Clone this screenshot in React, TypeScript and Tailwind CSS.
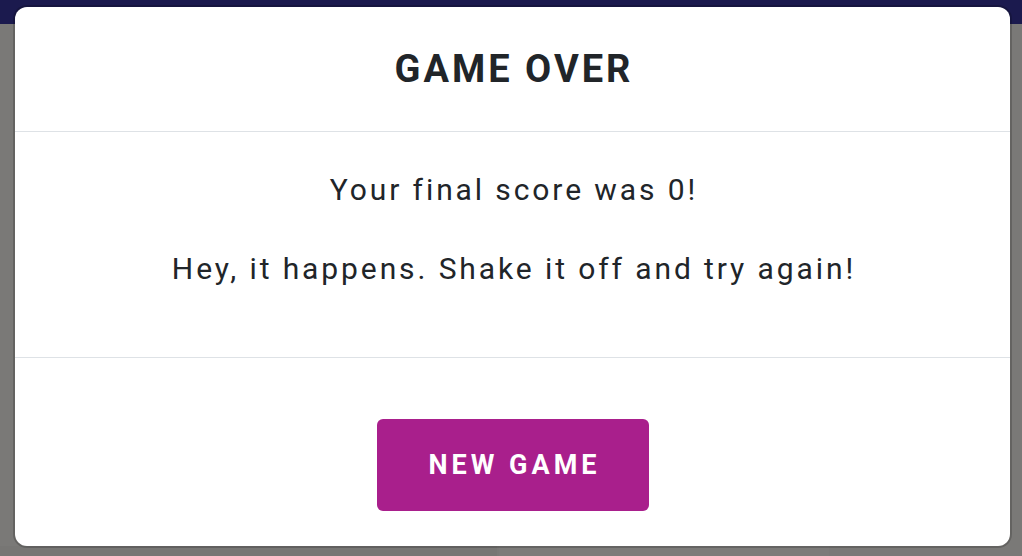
import React from "react";

export default function App() {
  return (
    <div
      className="relative h-[556px] w-[1022px] overflow-hidden bg-[#7a7977]"
      style={{ fontFamily: "Roboto, 'Noto Sans', sans-serif" }}
    >
      <div className="h-[24px] bg-[#1b1a4e]" />
      <div className="flex h-[532px] items-end gap-[2px] px-[0px]">
        <div className="h-[10px] w-[497px] bg-[#777674]" />
        <div className="h-[10px] w-[330px] bg-[#7c7b79]" />
        <div className="h-[10px] flex-1 bg-[#7a7977]" />
      </div>

      <div className="absolute inset-0 flex pb-[10px] pl-[15px] pr-[12px] pt-[7px]">
        <div className="flex flex-1 flex-col rounded-[12px] bg-white text-[#212529] shadow-[0_0_0_2px_rgba(0,0,0,0.18)]">
          <div className="flex h-[125px] shrink-0 items-center justify-center border-b border-[#dee2e6]">
            <h2 className="pl-[3px] text-[38px] font-bold leading-none tracking-[3px]">GAME OVER</h2>
          </div>
          <div className="flex h-[226px] shrink-0 flex-col items-center border-b border-[#dee2e6] pt-[38px] text-[30px] leading-[40px] tracking-[2.9px]">
            <p className="pl-[2.9px]">Your final score was 0!</p>
            <p className="mt-[39px] pl-[2.9px]">Hey, it happens. Shake it off and try again!</p>
          </div>
          <div className="flex flex-1 justify-center pt-[61px]">
            <button className="h-[92px] w-[272px] rounded-[6px] bg-[#a91f8c] pl-[4px] text-[27px] font-bold tracking-[4px] text-white">
              NEW GAME
            </button>
          </div>
        </div>
      </div>
    </div>
  );
}
